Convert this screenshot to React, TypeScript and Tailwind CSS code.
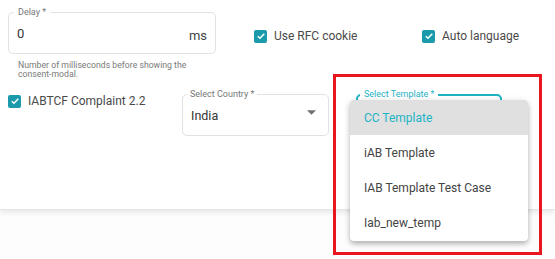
import React from "react";

function Check({ label, className = "" }: { label: string; className?: string }) {
  return (
    <div className={"flex items-center " + className}>
      <span className="flex h-[13px] w-[13px] shrink-0 items-center justify-center rounded-[2px] bg-[#1a9aab]">
        <svg width="10" height="10" viewBox="0 0 10 10">
          <path d="M1.8 5.2 L4 7.3 L8.3 2.8" fill="none" stroke="white" strokeWidth="1.5" />
        </svg>
      </span>
      <span className="ml-[7px] text-[12px] leading-[16px] text-[#4a4a4a]">{label}</span>
    </div>
  );
}

export default function App() {
  return (
    <div
      className="relative h-[259px] w-[555px] overflow-hidden bg-[#fdfdfd]"
      style={{ fontFamily: "Roboto, 'Liberation Sans', sans-serif" }}
    >
      <div className="relative h-[210px] border-b border-[#e6e6e6] bg-white shadow-[0_2px_6px_rgba(0,0,0,0.1)]">
        {/* Row 1 */}
        <div className="flex items-start pl-2 pt-3">
          <div className="w-[208px]">
            <div className="relative flex h-[42px] items-center justify-between rounded-[5px] border border-[#e2e2e2] pl-[8px] pr-[8px]">
              <span className="absolute left-[5px] top-[-7px] bg-white px-[4px] text-[9px] leading-[12px] text-[#777]">
                Delay *
              </span>
              <span className="mt-[2px] text-[13px] text-[#333]">0</span>
              <span className="mt-[5px] text-[13px] text-[#444]">ms</span>
            </div>
            <p className="mt-[7px] pl-[10px] text-[8.7px] leading-[9px] text-[#7a7a7a]">
              Number of milliseconds before showing the
              <br />
              consent-modal.
            </p>
          </div>
          <Check label="Use RFC cookie" className="ml-[38px] mt-[16px] w-[168px]" />
          <Check label="Auto language" className="mt-[16px]" />
        </div>

        {/* Row 2 */}
        <div className="mt-[15px] flex items-start pl-2">
          <Check label="IABTCF Complaint 2.2" className="-mt-[1px] w-[174px]" />
          <div className="relative flex h-[42px] w-[147px] items-center justify-between rounded-[5px] border border-[#e2e2e2] pl-[8px] pr-[12px]">
            <span className="absolute left-[4px] top-[-7px] bg-white px-[3px] text-[9px] leading-[12px] text-[#777]">
              Select Country *
            </span>
            <span className="mt-[2px] text-[12.5px] text-[#333]">India</span>
            <svg width="9" height="5" viewBox="0 0 10 5" className="-mt-[6px]">
              <path d="M0 0 L10 0 L5 5 Z" fill="#707070" />
            </svg>
          </div>
          <div className="relative ml-[27px] h-[42px] w-[146px] rounded-[5px] border-2 border-[#1fb3c4]">
            <span className="absolute left-[2px] top-[-8px] bg-white px-[4px] text-[9px] leading-[12px] text-[#1fb3c4]">
              Select Template *
            </span>
          </div>
        </div>
      </div>

      {/* Dropdown menu */}
      <div className="absolute left-[350px] top-[100px] z-10 w-[178px] overflow-hidden rounded-[4px] bg-white shadow-[0_3px_5px_rgba(0,0,0,0.25),0_1px_10px_rgba(0,0,0,0.08)]">
        <div className="flex h-[35px] items-center bg-[#e0e0e0] pl-[14px] text-[12px] text-[#21b4c6]">CC Template</div>
        <div className="flex h-[35px] items-center pl-[14px] text-[12px] text-[#444]">iAB Template</div>
        <div className="flex h-[35px] items-center pl-[14px] text-[12px] text-[#444]">IAB Template Test Case</div>
        <div className="flex h-[36px] items-center pl-[14px] text-[12px] text-[#444]">Iab_new_temp</div>
      </div>

      {/* Red highlight */}
      <div className="pointer-events-none absolute left-[333px] top-[74px] z-20 h-[181px] w-[209px] border-[3px] border-[#e8161e]" />
    </div>
  );
}
